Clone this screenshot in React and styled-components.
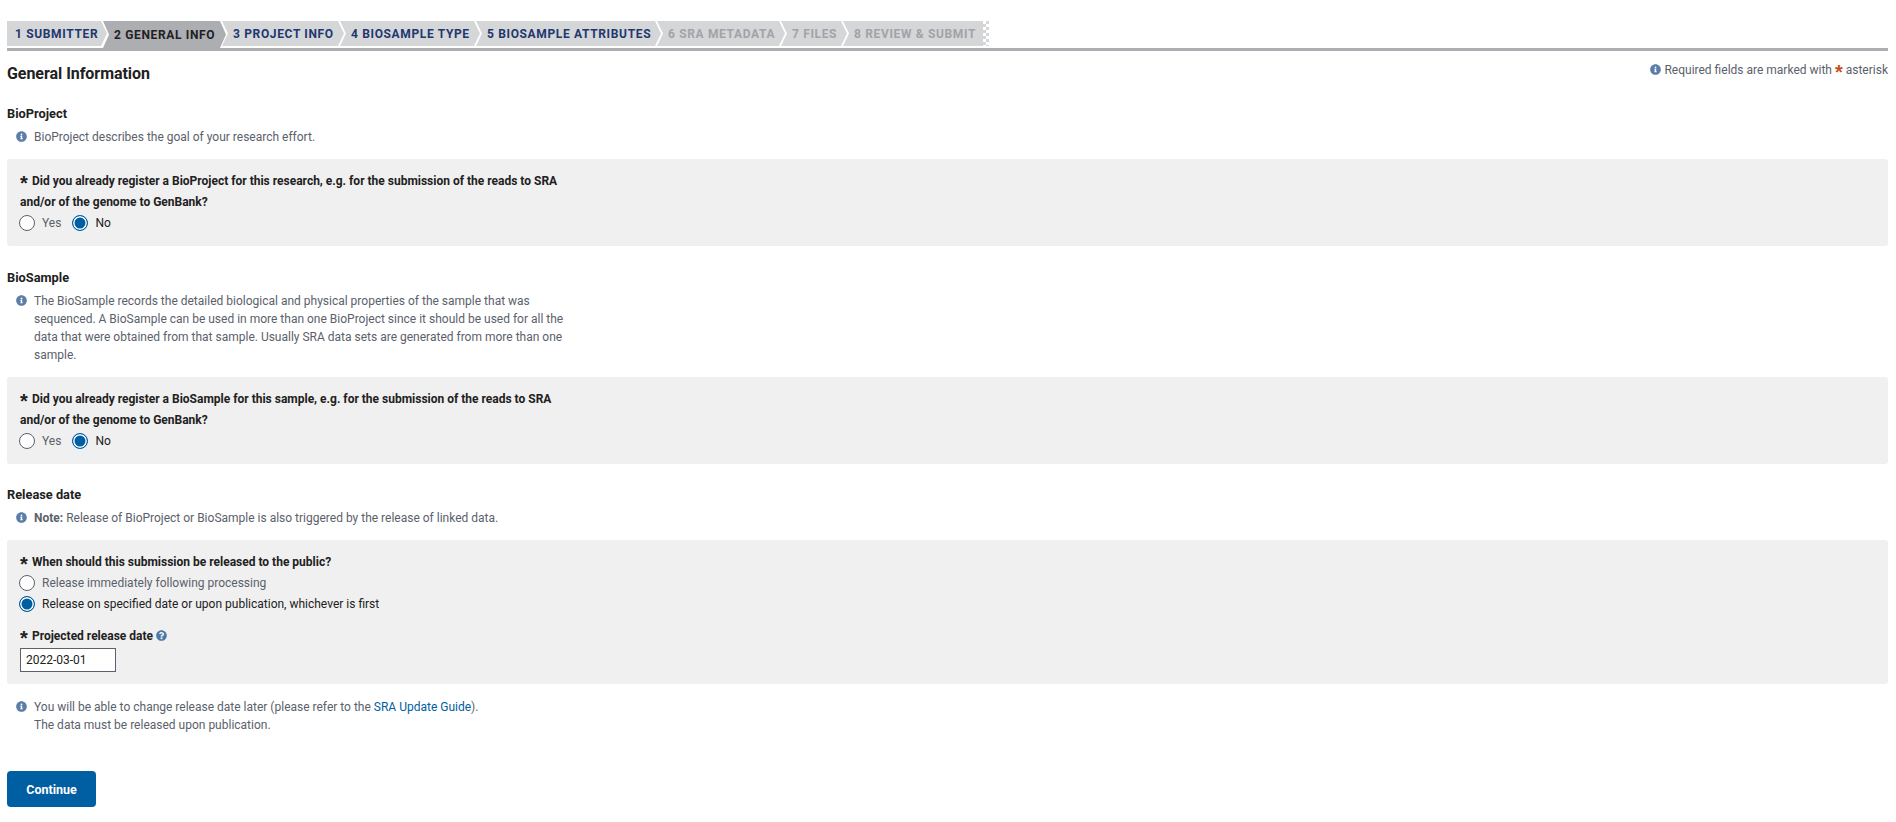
import React from "react";
import styled, { createGlobalStyle } from "styled-components";
import { FaInfoCircle, FaQuestionCircle } from "react-icons/fa";

const steps = [
  { label: "1 SUBMITTER", pitch: 96, state: "done", first: true },
  { label: "2 GENERAL INFO", pitch: 119, state: "active" },
  { label: "3 PROJECT INFO", pitch: 118, state: "done" },
  { label: "4 BIOSAMPLE TYPE", pitch: 136, state: "done" },
  { label: "5 BIOSAMPLE ATTRIBUTES", pitch: 181, state: "done" },
  { label: "6 SRA METADATA", pitch: 124, state: "todo" },
  { label: "7 FILES", pitch: 62, state: "todo" },
  { label: "8 REVIEW & SUBMIT", pitch: 140, state: "todo", last: true },
];

export default function App() {
  return (
    <Page>
      <GlobalStyle />
      <Steps>
        {steps.map((step) => (
          <Step key={step.label} $state={step.state} $first={step.first} $last={step.last} $pitch={step.pitch}>
            {step.label}
          </Step>
        ))}
        <StepEnd />
      </Steps>

      <TitleRow>
        <Title>General Information</Title>
        <Legend>
          <LegendIcon />
          Required fields are marked with <LegendStar>*</LegendStar> asterisk
        </Legend>
      </TitleRow>

      <SectionTitle $top={23}>BioProject</SectionTitle>
      <Note>
        <InfoIcon />
        <NoteText>BioProject describes the goal of your research effort.</NoteText>
      </Note>
      <Panel>
        <Question>
          <Star>*</Star>Did you already register a BioProject for this research, e.g. for the submission of the reads to SRA and/or of the genome to GenBank?
        </Question>
        <RadioRow>
          <RadioLabel>
            <Radio type="radio" name="bioproject" />
            Yes
          </RadioLabel>
          <RadioLabel $on>
            <Radio type="radio" name="bioproject" defaultChecked />
            No
          </RadioLabel>
        </RadioRow>
      </Panel>

      <SectionTitle $top={24}>BioSample</SectionTitle>
      <Note>
        <InfoIcon />
        <NoteText>
          The BioSample records the detailed biological and physical properties of the sample that was sequenced. A BioSample can be used in more than one BioProject since it should be used for all the data that were obtained from that sample. Usually SRA data sets are generated from more than one sample.
        </NoteText>
      </Note>
      <Panel>
        <Question>
          <Star>*</Star>Did you already register a BioSample for this sample, e.g. for the submission of the reads to SRA and/or of the genome to GenBank?
        </Question>
        <RadioRow>
          <RadioLabel>
            <Radio type="radio" name="biosample" />
            Yes
          </RadioLabel>
          <RadioLabel $on>
            <Radio type="radio" name="biosample" defaultChecked />
            No
          </RadioLabel>
        </RadioRow>
      </Panel>

      <SectionTitle $top={23}>Release date</SectionTitle>
      <Note>
        <InfoIcon />
        <NoteText>
          <b>Note:</b> Release of BioProject or BioSample is also triggered by the release of linked data.
        </NoteText>
      </Note>
      <Panel>
        <Question>
          <Star>*</Star>When should this submission be released to the public?
        </Question>
        <RadioColumn>
          <RadioLabel>
            <Radio type="radio" name="release" />
            Release immediately following processing
          </RadioLabel>
          <RadioLabel $on>
            <Radio type="radio" name="release" defaultChecked />
            Release on specified date or upon publication, whichever is first
          </RadioLabel>
        </RadioColumn>
        <DateLabel>
          <Star>*</Star>Projected release date <HelpIcon />
        </DateLabel>
        <DateInput defaultValue="2022-03-01" />
      </Panel>

      <FootNote>
        <InfoIcon />
        <NoteText>
          You will be able to change release date later (please refer to the <GuideLink href="#">SRA Update Guide</GuideLink>).
          <br />
          The data must be released upon publication.
        </NoteText>
      </FootNote>

      <ContinueButton type="button">Continue</ContinueButton>
    </Page>
  );
}

const GlobalStyle = createGlobalStyle`
  body {
    margin: 0;
    background: #fff;
    font-family: Roboto, "Liberation Sans", sans-serif;
    font-size: 12px;
    color: #212121;
  }
`;

const Page = styled.div`
  padding: 21px 8px 0 7px;
  height: 801px;
`;

const Steps = styled.div`
  display: flex;
  height: 27px;
  border-bottom: 3px solid #adaeb2;
`;

const stepColors = {
  done: "#20386f",
  active: "#212121",
  todo: "#a2a3a7",
};

const Step = styled.div`
  flex: none;
  width: ${({ $pitch, $last }) => ($last ? $pitch : $pitch + 4)}px;
  height: ${({ $state }) => ($state === "active" ? 27 : 25)}px;
  margin-right: ${({ $last }) => ($last ? 0 : -4)}px;
  padding: ${({ $state }) => ($state === "active" ? "2px" : "1px")} 0 0 ${({ $first }) => ($first ? 8 : 11)}px;
  box-sizing: border-box;
  background: ${({ $state }) => ($state === "active" ? "#adaeb2" : "#d5d6d8")};
  color: ${({ $state }) => stepColors[$state]};
  font-size: 12px;
  font-weight: 700;
  letter-spacing: 0.65px;
  line-height: 24px;
  white-space: nowrap;
  clip-path: ${({ $first, $last }) =>
    `polygon(${$first ? "0 0, 0 100%" : "0 0, 6px 50%, 0 100%"}, ${$last ? "100% 100%, 100% 0" : "calc(100% - 6px) 100%, 100% 50%, calc(100% - 6px) 0"})`};
`;

const StepEnd = styled.div`
  flex: none;
  width: 6px;
  height: 25px;
  background: repeating-conic-gradient(#d5d6d8 0 25%, #fff 0 50%) 0 0 / 6px 6px;
`;

const TitleRow = styled.div`
  display: flex;
  justify-content: space-between;
  align-items: flex-start;
  margin-top: 13px;
`;

const Title = styled.h1`
  margin: 0;
  font-size: 16px;
  line-height: 19px;
  font-weight: 700;
  letter-spacing: -0.05px;
  color: #212121;
`;

const Legend = styled.div`
  margin-top: -3px;
  line-height: 18px;
  color: #5b616b;
`;

const LegendStar = styled.span`
  color: #c7511f;
  font-family: "Liberation Sans", sans-serif;
  font-size: 20px;
  font-weight: 700;
  line-height: 0;
  vertical-align: -5px;
`;

const SectionTitle = styled.h2`
  margin: ${({ $top }) => $top}px 0 0;
  font-size: 12.8px;
  line-height: 16px;
  font-weight: 700;
  color: #212121;
`;

const InfoIcon = styled(FaInfoCircle)`
  flex: none;
  width: 11px;
  height: 11px;
  color: #5b7da8;
`;

const LegendIcon = styled(InfoIcon)`
  margin-right: 3px;
  vertical-align: -1px;
`;

const HelpIcon = styled(FaQuestionCircle)`
  width: 11px;
  height: 11px;
  color: #4a7aa8;
  vertical-align: -1px;
`;

const Note = styled.div`
  display: flex;
  gap: 7px;
  width: 555px;
  margin: 6px 0 13px;
  padding-left: 9px;
  color: #5b616b;
  line-height: 18px;

  svg {
    margin-top: 3px;
  }

  b {
    font-weight: 700;
  }
`;

const NoteText = styled.div`
  flex: 1;
`;

const Panel = styled.section`
  padding: 11px 13px 12px;
  background: #f0f0f0;
  border-radius: 3px;
`;

const Question = styled.div`
  width: 560px;
  margin-top: 1px;
  font-weight: 700;
  line-height: 21px;
  color: #212121;
`;

const Star = styled.span`
  display: inline-block;
  width: 12px;
  font-family: "Liberation Sans", sans-serif;
  font-size: 20px;
  font-weight: 700;
  line-height: 0;
  vertical-align: -5px;
`;

const RadioRow = styled.div`
  display: flex;
  gap: 12px;
  height: 21px;
  margin: -1px 0 1px;
  align-items: center;
`;

const RadioColumn = styled.div`
  display: flex;
  flex-direction: column;
  margin-top: -1px;
`;

const RadioLabel = styled.label`
  display: flex;
  align-items: center;
  gap: 7px;
  height: 21px;
  color: ${({ $on }) => ($on ? "#212121" : "#5b616b")};
`;

const Radio = styled.input`
  appearance: none;
  box-sizing: border-box;
  width: 16px;
  height: 16px;
  margin: 0 0 0 -1px;
  border: 1px solid #5b616b;
  border-radius: 50%;
  background: #fff;

  &:checked {
    border: 1.5px solid #005ea2;
    background: #005ea2;
    box-shadow: inset 0 0 0 1.5px #fff;
  }
`;

const DateLabel = styled.div`
  margin-top: 12px;
  font-weight: 700;
  line-height: 21px;
  color: #212121;
`;

const DateInput = styled.input`
  display: block;
  box-sizing: border-box;
  width: 96px;
  height: 24px;
  margin-top: 1px;
  padding: 0 5px;
  border: 1px solid #5b616b;
  border-radius: 0;
  background: #fff;
  font: 12px Roboto, sans-serif;
  color: #212121;
`;

const FootNote = styled(Note)`
  margin: 14px 0 0;
`;

const GuideLink = styled.a`
  color: #005ea2;
  text-decoration: none;
`;

const ContinueButton = styled.button`
  display: block;
  width: 89px;
  height: 36px;
  margin-top: 37px;
  border: 0;
  border-radius: 4px;
  background: #005ea2;
  color: #fff;
  font: 700 12.5px Roboto, sans-serif;
`;
